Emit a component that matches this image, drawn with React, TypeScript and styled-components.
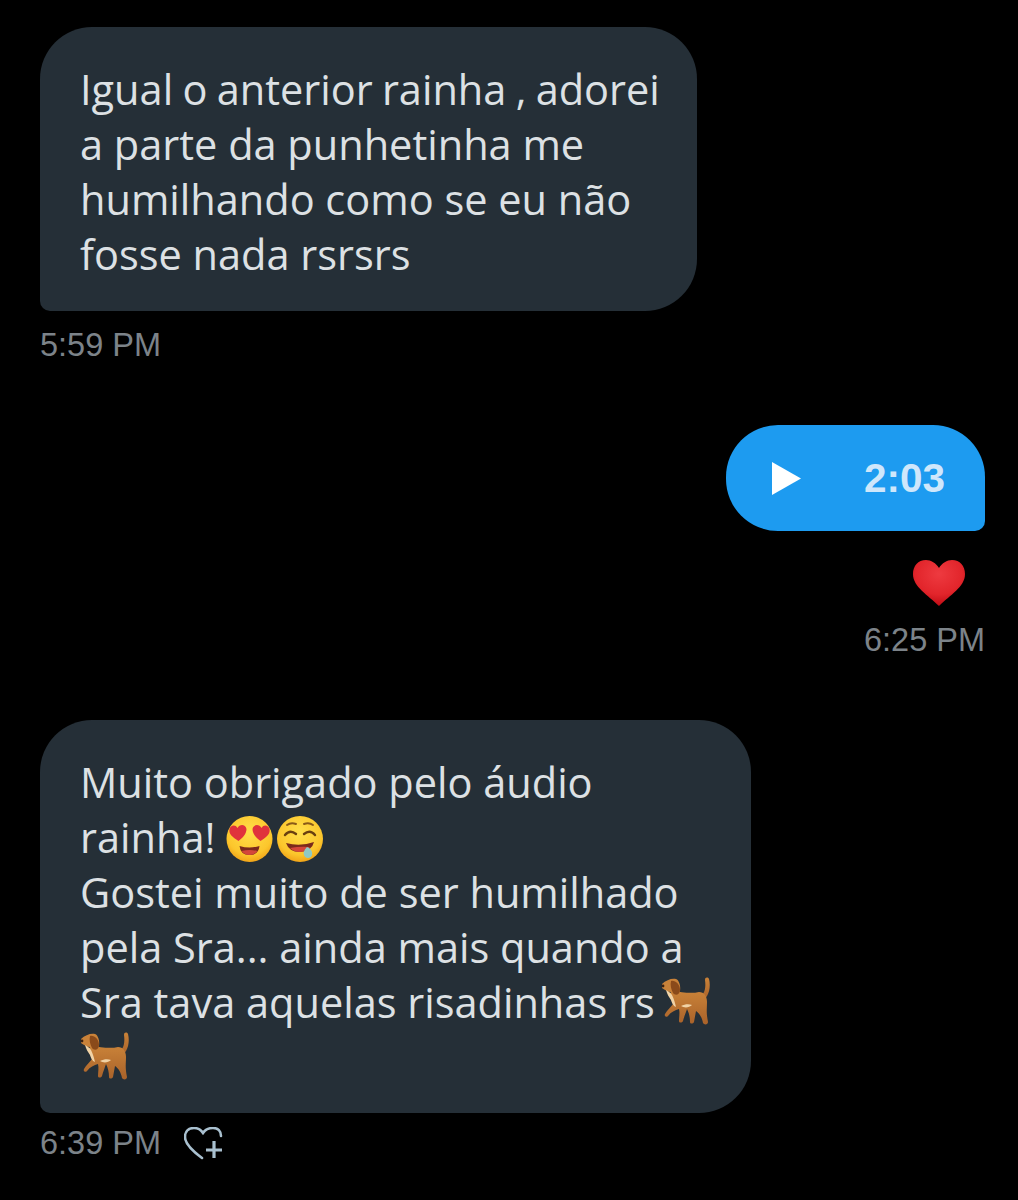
import React from "react";
import styled, { createGlobalStyle } from "styled-components";

const Global = createGlobalStyle`
  html, body { margin: 0; padding: 0; background: #000; }
  #root { width: 1018px; height: 1200px; overflow: hidden; }
`;

const Page = styled.main`
  display: flex;
  flex-direction: column;
  box-sizing: border-box;
  height: 1200px;
  padding: 27px 33px 0 40px;
  background: #000;
`;

const Incoming = styled.section<{ $gap: number }>`
  display: flex;
  flex-direction: column;
  align-items: flex-start;
  margin-bottom: ${(p) => p.$gap}px;
`;

const Outgoing = styled.section<{ $gap: number }>`
  display: flex;
  flex-direction: column;
  align-items: flex-end;
  margin-bottom: ${(p) => p.$gap}px;
`;

const TextBubble = styled.div<{ $width: number; $height: number }>`
  box-sizing: border-box;
  width: ${(p) => p.$width}px;
  height: ${(p) => p.$height}px;
  padding: 35px 0 0 40px;
  background: #252f37;
  border-radius: 52px 52px 52px 10px;
  color: #dde1e4;
  font-family: "Open Sans", "Noto Sans", sans-serif;
  font-size: 41.5px;
  line-height: 55px;
  white-space: nowrap;
`;

const TightWords = styled.span`
  word-spacing: -1.5px;
`;

const AudioBubble = styled.div`
  display: flex;
  align-items: center;
  justify-content: space-between;
  box-sizing: border-box;
  width: 259px;
  height: 106px;
  padding: 0 40px 0 46px;
  background: #1d9bf0;
  border-radius: 52px 52px 10px 52px;
`;

const Duration = styled.span`
  color: #cfe7fb;
  font-family: "Liberation Sans", Arial, sans-serif;
  font-size: 40.5px;
  font-weight: 700;
`;

const Stamp = styled.time`
  display: block;
  color: #7c8389;
  font-family: "Liberation Sans", Arial, sans-serif;
  font-size: 32.5px;
  line-height: 36px;
`;

const MetaRow = styled.div<{ $top: number }>`
  display: flex;
  align-items: center;
  gap: 23px;
  margin-top: ${(p) => p.$top}px;
`;

const HeartMark = styled.div`
  display: flex;
  margin: 29px 20px 16px 0;
`;

const Glyph = styled.svg<{ $drop?: number; $before?: number; $after?: number }>`
  display: inline-block;
  vertical-align: ${(p) => p.$drop ?? -9}px;
  margin-left: ${(p) => p.$before ?? 0}px;
  margin-right: ${(p) => p.$after ?? 0}px;
`;

const Play = () => (
  <svg width="29" height="33" viewBox="0 0 29 33" aria-hidden="true">
    <path d="M0 0 L29 16.5 L0 33 Z" fill="#fff" />
  </svg>
);

const RedHeart = () => (
  <svg width="52" height="46" viewBox="0 0 52 46" aria-hidden="true">
    <defs>
      <radialGradient id="hrt" cx="0.5" cy="0.3" r="0.75">
        <stop offset="0" stopColor="#ee3a40" />
        <stop offset="0.6" stopColor="#e2252b" />
        <stop offset="1" stopColor="#b80610" />
      </radialGradient>
    </defs>
    <path d="M26 8 C23 3 18 0 13 0 C5 0 0 6 0 14 C0 27 15 35 26 46 C37 35 52 27 52 14 C52 6 47 0 39 0 C34 0 29 3 26 8 Z" fill="url(#hrt)" />
  </svg>
);

const Defs = () => (
  <svg width="0" height="0" style={{ position: "absolute" }} aria-hidden="true">
    <defs>
      <radialGradient id="face" cx="0.5" cy="0.35" r="0.7">
        <stop offset="0" stopColor="#ffdf4a" />
        <stop offset="0.7" stopColor="#fcc62c" />
        <stop offset="1" stopColor="#ee9a12" />
      </radialGradient>
      <linearGradient id="fur" x1="0" y1="0" x2="0" y2="1">
        <stop offset="0" stopColor="#c98238" />
        <stop offset="1" stopColor="#a9622a" />
      </linearGradient>
    </defs>
  </svg>
);

const HeartEyes = () => (
  <Glyph width="47" height="46" viewBox="0 0 46 46" $after={4} aria-hidden="true">
    <circle cx="23" cy="23" r="23" fill="url(#face)" />
    <path d="M12 25 C6 21 2 18 3 13 C4 9 9 8 11 12 C13 8 19 8 20 13 C20 18 16 22 12 25 Z" fill="#e0323c" />
    <path d="M34 25 C30 22 26 18 26 13 C27 8 33 8 35 12 C37 8 42 9 43 13 C44 18 40 21 34 25 Z" fill="#e0323c" />
    <path d="M13 30 Q23 33 33 30 Q32 39 23 39 Q14 39 13 30 Z" fill="#7a2a1c" />
    <path d="M15 35 Q23 33 31 35 Q28 39 23 39 Q18 39 15 35 Z" fill="#d4463a" />
  </Glyph>
);

const Drool = () => (
  <Glyph width="46" height="46" viewBox="0 0 46 46" aria-hidden="true">
    <circle cx="23" cy="23" r="23" fill="url(#face)" />
    <path d="M10 9 Q14 6 19 8" fill="none" stroke="#8a5a18" strokeWidth="2" strokeLinecap="round" />
    <path d="M27 8 Q32 6 36 9" fill="none" stroke="#8a5a18" strokeWidth="2" strokeLinecap="round" />
    <path d="M8 19 Q13 13 19 18" fill="none" stroke="#6a4010" strokeWidth="2.4" strokeLinecap="round" />
    <path d="M27 18 Q33 13 38 19" fill="none" stroke="#6a4010" strokeWidth="2.4" strokeLinecap="round" />
    <path d="M9 27 Q23 31 37 26 Q35 35 23 36 Q12 36 9 27 Z" fill="#7a2a1c" />
    <path d="M13 32 Q23 30 33 31 Q28 36 23 36 Q17 36 13 32 Z" fill="#d4463a" />
    <path d="M30 31 C33 32 36 35 35 39 C34 43 28 43 27 39 C26 36 28 33 30 31 Z" fill="#8fc9c4" />
  </Glyph>
);

const Dog = ({ before }: { before?: number }) => (
  <Glyph width="50" height="49" viewBox="0 0 50 49" $drop={-8} $before={before} aria-hidden="true">
    <path d="M40 19 C44 16 45 10 44 3 C44 0 47 0 48 2 C50 10 48 18 43 23 Z" fill="url(#fur)" />
    <path d="M12 14 C20 15 30 17 38 15 C43 15 46 19 46 25 C46 31 45 35 47 45 C47 48 43 48 42 46 C41 40 38 36 35 34 L33 45 C32 47 29 47 29 45 C29 40 28 36 26 32 C25 35 23 40 22 44 C21 46 18 46 18 44 C18 40 19 36 18 32 C14 33 10 35 7 39 C5 41 3 39 4 37 C6 33 10 30 12 27 C10 23 9 19 9 16 Z" fill="url(#fur)" />
    <path d="M1 7 C5 3 11 1 15 2 C18 3 20 9 19 14 C17 18 13 18 10 15 C7 15 4 13 1 11 Z" fill="#c98239" />
    <path d="M10 4 C14 3 19 7 19 13 C19 18 14 19 12 16 C10 12 9 8 10 4 Z" fill="#8a4a1a" />
    <path d="M5 13 C8 15 10 16 11 18 C13 22 14 26 15 30 C12 29 11 26 10 23 C8 20 6 17 5 13 Z" fill="#f1d3a6" />
    <path d="M20 29 C24 27 28 27 31 28 C28 31 23 31 20 29 Z" fill="#f1d3a6" />
    <circle cx="2" cy="9" r="1.4" fill="#3a2010" />
  </Glyph>
);

const OutlineHeartPlus = () => (
  <svg width="39" height="33" viewBox="0 0 39 33" aria-hidden="true">
    <path d="M18 31 C10 25 1 17 1 10 C1 4 5 1 10 1 C14 1 17 3 19 6 C21 3 25 1 29 1 C34 1 37 4 37 9" fill="none" stroke="#a9c0cf" strokeWidth="2.6" strokeLinecap="round" />
    <path d="M30 14 V31 M22 23 H38" fill="none" stroke="#a9c0cf" strokeWidth="3.2" />
  </svg>
);

export default function App() {
  return (
    <>
      <Global />
      <Defs />
      <Page>
        <Incoming $gap={62}>
          <TextBubble $width={657} $height={284}>
            <TightWords>Igual o anterior rainha , adorei</TightWords>
            <br />a parte da punhetinha me
            <br />humilhando como se eu não
            <br />fosse nada rsrsrs
          </TextBubble>
          <MetaRow $top={16}>
            <Stamp>5:59 PM</Stamp>
          </MetaRow>
        </Incoming>
        <Outgoing $gap={62}>
          <AudioBubble>
            <Play />
            <Duration>2:03</Duration>
          </AudioBubble>
          <HeartMark>
            <RedHeart />
          </HeartMark>
          <Stamp>6:25 PM</Stamp>
        </Outgoing>
        <Incoming $gap={0}>
          <TextBubble $width={711} $height={393}>
            Muito obrigado pelo áudio
            <br />rainha! <HeartEyes />
            <Drool />
            <br />Gostei muito de ser humilhado
            <br />pela Sra... ainda mais quando a
            <br />Sra tava aquelas risadinhas rs
            <Dog before={6} />
            <br />
            <Dog />
          </TextBubble>
          <MetaRow $top={12}>
            <Stamp>6:39 PM</Stamp>
            <OutlineHeartPlus />
          </MetaRow>
        </Incoming>
      </Page>
    </>
  );
}
